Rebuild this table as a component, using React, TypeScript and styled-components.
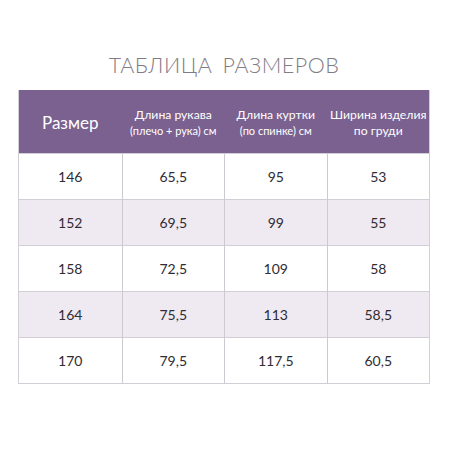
import React from 'react';
import styled, { createGlobalStyle } from 'styled-components';

const GlobalStyle = createGlobalStyle`
  html, body {
    margin: 0;
    padding: 0;
    background: #ffffff;
  }
  body {
    font-family: 'Lato', 'Noto Sans', sans-serif;
  }
`;

const rows = [
  ['146', '65,5', '95', '53'],
  ['152', '69,5', '99', '55'],
  ['158', '72,5', '109', '58'],
  ['164', '75,5', '113', '58,5'],
  ['170', '79,5', '117,5', '60,5'],
];

const Page = styled.div`
  width: 450px;
  height: 450px;
  box-sizing: border-box;
  padding: 51px 20px 0 18px;
  display: flex;
  flex-direction: column;
  align-items: center;
`;

const Title = styled.h1`
  margin: 0 0 11px 0;
  height: 28px;
  font-family: 'Lato', sans-serif;
  font-weight: 300;
  font-size: 21.5px;
  line-height: 28px;
  letter-spacing: 0.5px;
  word-spacing: 4px;
  color: #7f7c86;
`;

const Table = styled.div`
  width: 412px;
  display: grid;
  grid-template-columns: repeat(4, 1fr);
  grid-template-rows: 63px repeat(5, 46px);
  border-right: 1px solid #d2ced5;
  border-bottom: 1px solid #d2ced5;
  border-left: 1px solid #d2ced5;
  box-sizing: border-box;
`;

const HeadCell = styled.div<{ $first?: boolean }>`
  background: #7b6190;
  color: #ffffff;
  display: flex;
  flex-direction: column;
  align-items: center;
  justify-content: center;
  text-align: center;
  white-space: nowrap;
  border-left: ${(p) => (p.$first ? 'none' : '1px solid #7a5f8f')};
  font-family: 'Lato', sans-serif;
  padding-top: 2px;
`;

const HeadMain = styled.span<{ $big?: boolean }>`
  font-size: ${(p) => (p.$big ? '17px' : '12.2px')};
  line-height: ${(p) => (p.$big ? '20px' : '16px')};
`;

const HeadSub = styled.span`
  font-size: 11px;
  line-height: 16px;
`;

const Cell = styled.div<{ $alt: boolean; $first: boolean }>`
  background: ${(p) => (p.$alt ? '#efeaf1' : '#ffffff')};
  border-top: 1px solid #d2ced5;
  border-left: ${(p) => (p.$first ? 'none' : '1px solid #cdc9d0')};
  display: flex;
  align-items: center;
  justify-content: center;
  font-family: 'Lato', sans-serif;
  font-size: 14px;
  color: #2f2c33;
`;

export default function App() {
  return (
    <>
      <GlobalStyle />
      <Page>
        <Title>ТАБЛИЦА РАЗМЕРОВ</Title>
        <Table>
          <HeadCell $first>
            <HeadMain $big>Размер</HeadMain>
          </HeadCell>
          <HeadCell>
            <HeadMain>Длина рукава</HeadMain>
            <HeadSub>(плечо + рука) см</HeadSub>
          </HeadCell>
          <HeadCell>
            <HeadMain>Длина куртки</HeadMain>
            <HeadSub>(по спинке) см</HeadSub>
          </HeadCell>
          <HeadCell>
            <HeadMain>Ширина изделия</HeadMain>
            <HeadMain>по груди</HeadMain>
          </HeadCell>
          {rows.map((row, i) =>
            row.map((v, j) => (
              <Cell key={`${i}-${j}`} $alt={i % 2 === 1} $first={j === 0}>
                {v}
              </Cell>
            )),
          )}
        </Table>
      </Page>
    </>
  );
}
